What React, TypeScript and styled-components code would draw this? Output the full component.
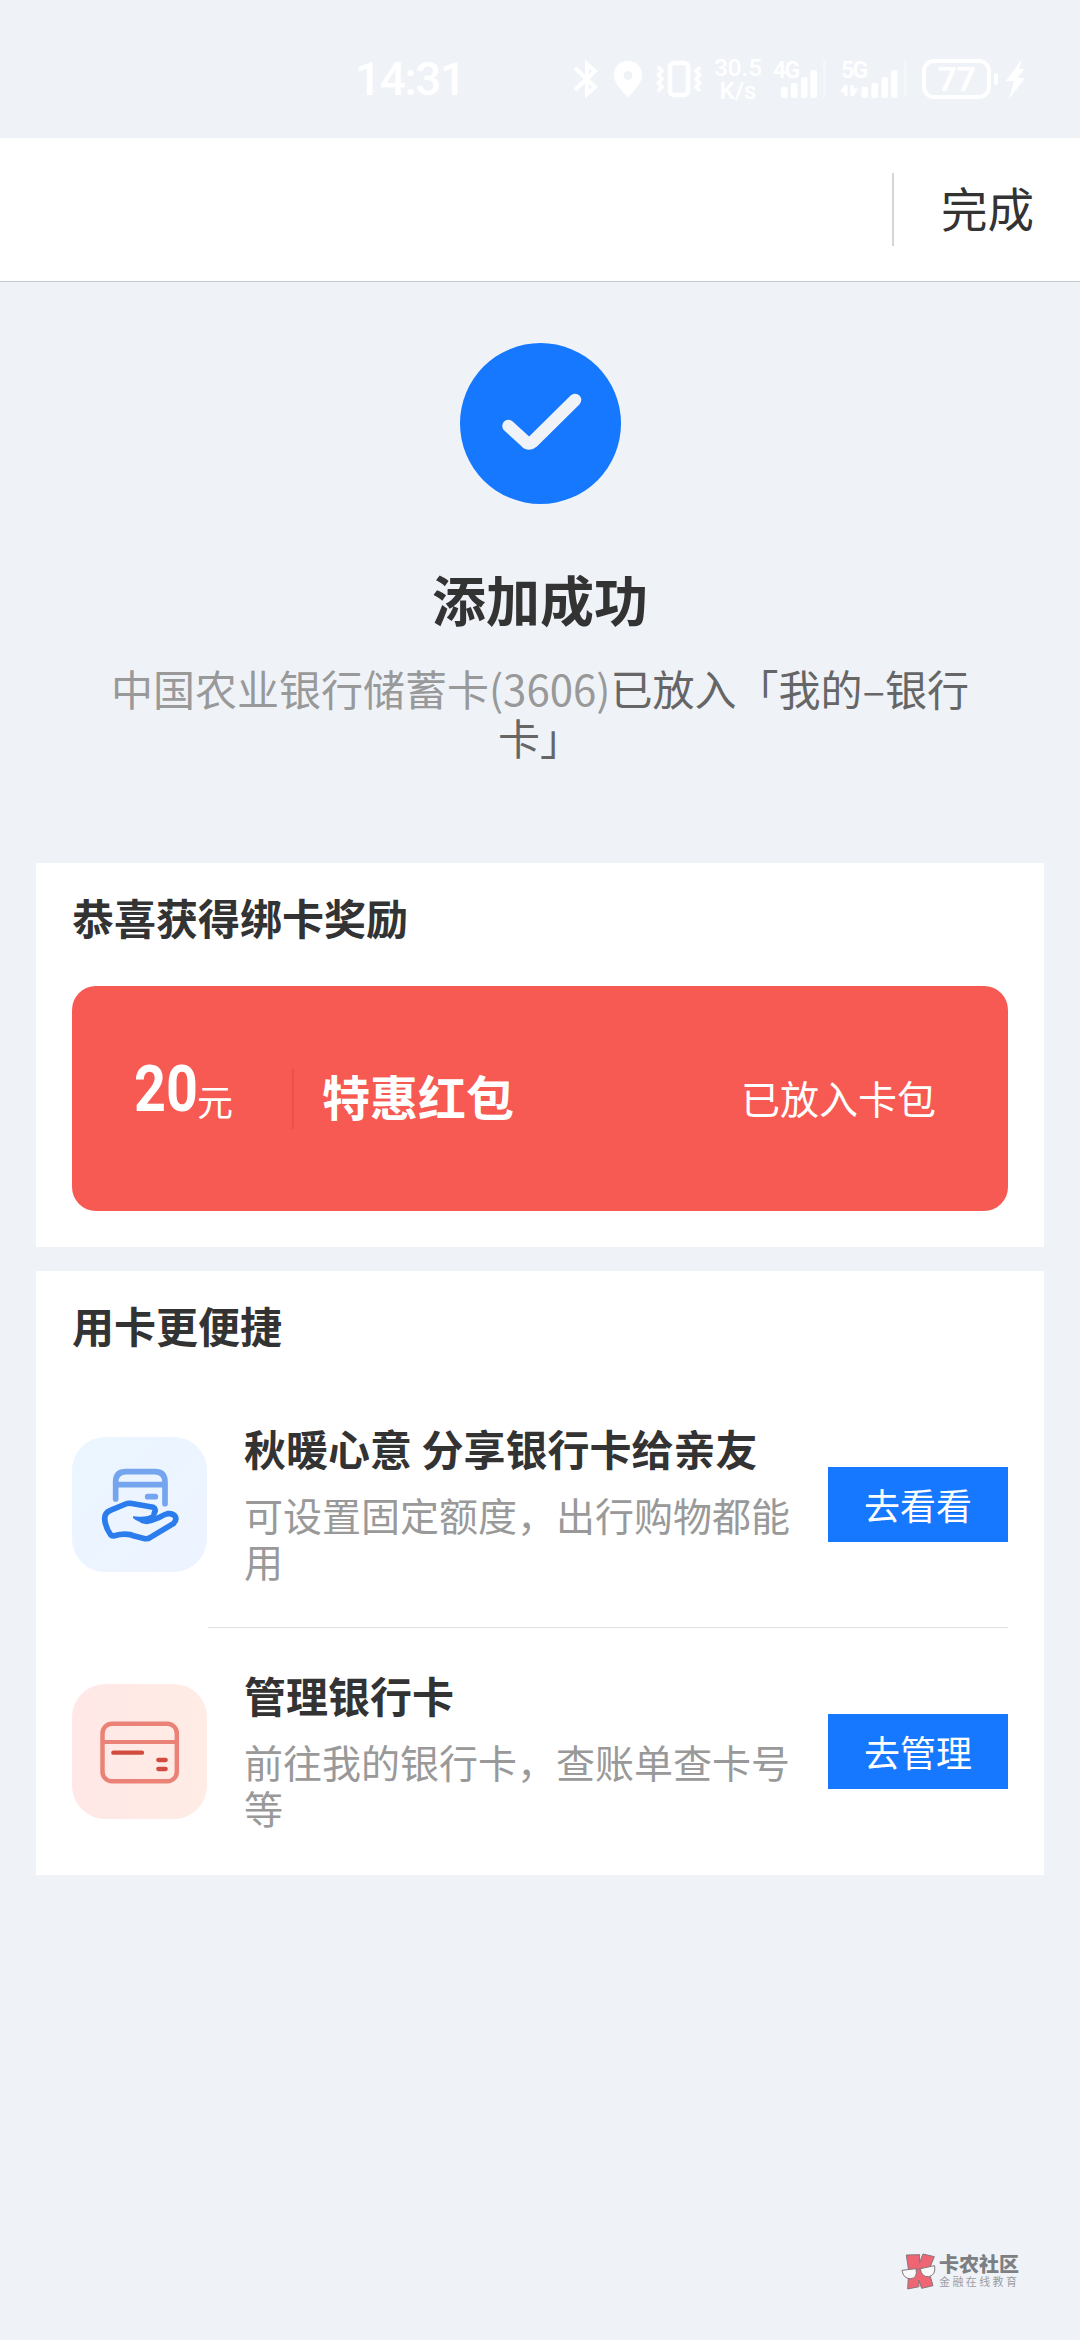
import React from 'react';
import styled, { createGlobalStyle } from 'styled-components';

const cjk = `'Noto Sans CJK SC', 'Noto Sans', sans-serif`;
const latin = `Roboto, 'Noto Sans', sans-serif`;

const GlobalStyle = createGlobalStyle`
  *, *::before, *::after { box-sizing: border-box; }
  body { margin: 0; background: #eff3f8; font-family: ${cjk}; }
  h1, h2, h3, p { margin: 0; }
`;

const Screen = styled.div`
  display: flex;
  flex-direction: column;
  width: 1080px;
  height: 2340px;
  overflow: hidden;
  background: #eff3f8;
`;

/* ---------- status bar ---------- */

const StatusBar = styled.div`
  display: flex;
  align-items: flex-start;
  flex: none;
  height: 138px;
  padding: 59px 54px 0 355px;
  color: #fff;
  font-family: ${latin};
`;

const Clock = styled.span`
  width: 110px;
  margin-right: auto;
  font-size: 46px;
  font-weight: 500;
  line-height: 40px;
  letter-spacing: -1.4px;
  white-space: nowrap;
`;

const StatusIcon = styled.svg<{ $gap?: number }>`
  display: block;
  flex: none;
  margin-right: ${(p) => p.$gap ?? 0}px;
`;

const NetSpeed = styled.span`
  width: 48px;
  margin: -2px 11px 0 0;
  font-size: 24px;
  font-weight: 500;
  line-height: 23px;
  text-align: center;
`;

const Signal = styled.span<{ $width: number; $gap: number }>`
  position: relative;
  flex: none;
  width: ${(p) => p.$width}px;
  height: 40px;
  margin-right: ${(p) => p.$gap}px;
`;

const SignalLabel = styled.span`
  position: absolute;
  left: 0;
  top: 0;
  font-size: 23px;
  font-weight: 600;
  line-height: 23px;
  letter-spacing: -1.6px;
`;

const Battery = styled.span`
  display: flex;
  align-items: center;
  justify-content: center;
  width: 69px;
  height: 40px;
  border: 4px solid #fff;
  border-radius: 12px;
  font-size: 34px;
  font-weight: 600;
  line-height: 32px;
  letter-spacing: -0.5px;
`;

const BatteryTip = styled.span`
  width: 4px;
  height: 12px;
  margin: 14px 8px 0 3px;
  border-radius: 2px;
  background: #fff;
`;

/* ---------- title bar ---------- */

const TitleBar = styled.header`
  display: flex;
  align-items: center;
  justify-content: flex-end;
  flex: none;
  height: 144px;
  border-bottom: 1px solid #c3cad1;
  background: #fff;
`;

const DoneButton = styled.button`
  display: flex;
  align-items: center;
  height: 73px;
  padding: 0 46px 5px 47px;
  border: 0;
  border-left: 2px solid #d6d6d6;
  background: none;
  color: #333;
  font: 400 46.5px/60px ${cjk};
`;

/* ---------- result ---------- */

const Result = styled.section`
  display: flex;
  flex-direction: column;
  align-items: center;
  flex: none;
  height: 581px;
  padding: 61px 100px 0;
`;

const ResultTitle = styled.h1`
  margin-top: 63px;
  color: #333;
  font-size: 54px;
  font-weight: 700;
  line-height: 64px;
`;

const ResultText = styled.p`
  margin-top: 32px;
  color: #666;
  font-size: 42px;
  line-height: 49px;
  text-align: center;
`;

const BankCard = styled.span`
  color: #999;
`;

/* ---------- cards ---------- */

const Card = styled.section`
  flex: none;
  margin: 0 36px 24px;
  padding: 29px 36px 0;
  background: #fff;
`;

const RewardCard = styled(Card)`
  height: 384px;
`;

const CardHeading = styled.h2`
  color: #333;
  font-size: 42px;
  font-weight: 700;
  line-height: 50px;
`;

const Coupon = styled.div`
  display: flex;
  align-items: center;
  height: 225px;
  margin-top: 44px;
  padding-right: 72px;
  border-radius: 24px;
  background: #f65a52;
  color: #fff;
`;

const Amount = styled.div`
  display: flex;
  align-items: baseline;
  width: 222px;
  height: 60px;
  padding-left: 62px;
  border-right: 2px solid #ec4f49;
  line-height: 52px;
`;

const AmountValue = styled.span`
  width: 63px;
  font-family: ${latin};
  font-size: 64px;
  font-weight: 700;
  line-height: 52px;
  transform: translateY(-5px) scaleX(0.87);
  transform-origin: left;
`;

const AmountUnit = styled.span`
  font-size: 36px;
`;

const CouponName = styled.h3`
  margin: -7px 0 0 28px;
  font-size: 48px;
  font-weight: 700;
  line-height: 60px;
`;

const CouponState = styled.span`
  margin: -3px 0 0 auto;
  font-size: 39px;
  line-height: 60px;
`;

const ServiceList = styled.div`
  margin-top: 31px;
`;

const ServiceRow = styled.div`
  display: grid;
  grid-template-columns: 135px 1fr 180px;
  align-items: center;
  height: 247px;
  background: linear-gradient(#e0e0e0, #e0e0e0) right bottom / 800px 1px no-repeat;

  &:last-child {
    background: none;
  }
`;

const Tile = styled.svg`
  display: block;
  width: 135px;
  height: 135px;
`;

const ServiceText = styled.div`
  padding: 0 0 3px 37px;
`;

const ServiceTitle = styled.h3`
  color: #333;
  font-size: 42px;
  font-weight: 700;
  line-height: 50px;
  white-space: nowrap;
`;

const ServiceDesc = styled.p`
  width: 549px;
  margin-top: 18px;
  color: #999;
  font-size: 39px;
  line-height: 46px;
`;

const ActionButton = styled.button`
  height: 75px;
  padding: 0 0 2px;
  border: 0;
  background: #1677ff;
  color: #fff;
  font: 400 36px/70px ${cjk};
`;

/* ---------- watermark ---------- */

const Watermark = styled.footer`
  display: flex;
  margin: auto 61px 50px auto;
`;

const WatermarkText = styled.div`
  display: flex;
  flex-direction: column;
  margin-left: 3px;
  white-space: nowrap;
`;

const WatermarkName = styled.span`
  color: #7d7f83;
  font-size: 20px;
  font-weight: 900;
  line-height: 22px;
`;

const WatermarkSlogan = styled.span`
  width: 80px;
  color: #9c9ea2;
  font-size: 11px;
  line-height: 13px;
  letter-spacing: 2.4px;
`;

const bars = [
  { x: 0, h: 11 },
  { x: 10, h: 15 },
  { x: 20, h: 21 },
  { x: 29.5, h: 28 },
];

function SignalBars({ offset, width, traffic }: { offset: number; width: number; traffic?: boolean }) {
  return (
    <StatusIcon width={width} height={40} viewBox={`0 0 ${width} 40`} fill="#fff">
      {traffic && (
        <path d="M5 26V37M5 26L1.500 32H5M11 26V37M11 37L14.500 31H11" fill="none" stroke="#fff" strokeWidth={3} />
      )}
      {bars.map((b) => (
        <rect key={b.x} x={offset + b.x} y={39 - b.h} width={6.5} height={b.h} rx={2} />
      ))}
      <rect x={width - 3} y={1} width={3} height={37} opacity={0.35} />
    </StatusIcon>
  );
}

function HandTile() {
  return (
    <Tile viewBox="126 529 405 405" fill="none" strokeLinecap="round" strokeLinejoin="round">
      <defs>
        <linearGradient id="blueTile" x1="0" y1="0" x2="1" y2="1">
          <stop offset="0" stopColor="#ebf6ff" />
          <stop offset="1" stopColor="#edf3ff" />
        </linearGradient>
      </defs>
      <rect x="126" y="529" width="405" height="405" rx="100" fill="url(#blueTile)" />
      <g stroke="#74a5ee" strokeWidth="17">
        <path d="M257 715V664Q257 633 288 633H374Q405 633 405 664V729" />
        <path d="M258 672H404" strokeLinecap="butt" />
        <path d="M353 708H376" />
      </g>
      <path
        stroke="#2b7cec"
        strokeWidth="17"
        d="M373 757Q379 744 370 740L301 728Q294 727 287 730L241 749Q224 756 224 774Q226 801 242 822Q246 827 253 825Q289 815 316 827L345 834Q354 835 361 830L430 789Q441 779 436 768Q430 757 412 759Q403 761 388 770L362 780Q350 784 338 780"
      />
      <path fill="#2b7cec" d="M309 767Q337 770 356 765Q370 760 372 747L384 750L374 770L348 788Q324 785 309 772Z" />
    </Tile>
  );
}

function CardTile() {
  return (
    <Tile viewBox="126 191 405 405" fill="none" strokeLinecap="round">
      <defs>
        <linearGradient id="redTile" x1="0" y1="0" x2="1" y2="0">
          <stop offset="0" stopColor="#ffe8e7" />
          <stop offset="1" stopColor="#ffece5" />
        </linearGradient>
      </defs>
      <rect x="126" y="191" width="405" height="405" rx="100" fill="url(#redTile)" />
      <rect x="217.500" y="310" width="223" height="173" rx="29" stroke="#ea8278" strokeWidth="13.500" />
      <path d="M218 365H440" stroke="#ea8278" strokeWidth="12" />
      <path d="M250 397H336M385 419H407M385 446H407" stroke="#d14c3f" strokeWidth="13" />
    </Tile>
  );
}

const services = [
  {
    title: '秋暖心意 分享银行卡给亲友',
    desc: '可设置固定额度，出行购物都能用',
    action: '去看看',
    icon: <HandTile />,
  },
  {
    title: '管理银行卡',
    desc: '前往我的银行卡，查账单查卡号等',
    action: '去管理',
    icon: <CardTile />,
  },
];

export default function App() {
  return (
    <Screen>
      <GlobalStyle />
      <StatusBar>
        <Clock>14:31</Clock>
        <StatusIcon $gap={14} width={26} height={40} viewBox="0 0 26 40" fill="none" stroke="#fff" strokeWidth={4}>
          <path d="M2 9L22 28L14 35V5L22 12L2 31" />
        </StatusIcon>
        <StatusIcon $gap={13} width={30} height={40} viewBox="0 0 30 40" fill="#fff">
          <path fillRule="evenodd" d="M15 2C6.500 2 1 8 1 16C1 25 10 32 15 39C20 32 29 25 29 16C29 8 23.500 2 15 2ZM15 12A4.500 4.500 0 1 1 15 21A4.500 4.500 0 1 1 15 12Z" />
        </StatusIcon>
        <StatusIcon $gap={12} width={46} height={40} viewBox="0 0 46 40" fill="none" stroke="#fff">
          <rect x="14" y="4" width="18" height="32" rx="4" strokeWidth="4.500" />
          <path strokeWidth="3.500" d="M2 8L6 12L2.500 16L6 20L2.500 24L6 28L2 32M44 8L40 12L43.500 16L40 20L43.500 24L40 28L44 32" />
        </StatusIcon>
        <NetSpeed>30.5 K/s</NetSpeed>
        <Signal $width={53} $gap={15}>
          <SignalLabel>4G</SignalLabel>
          <SignalBars offset={8} width={53} />
        </Signal>
        <Signal $width={66} $gap={15}>
          <SignalLabel>5G</SignalLabel>
          <SignalBars offset={20.5} width={66} traffic />
        </Signal>
        <Battery>77</Battery>
        <BatteryTip />
        <StatusIcon width={20} height={40} viewBox="0 0 20 40" fill="#fff">
          <path d="M16 0L0 22H8L3 40L19 19H11.500L18 10H13Z" />
        </StatusIcon>
      </StatusBar>

      <TitleBar>
        <DoneButton>完成</DoneButton>
      </TitleBar>

      <Result>
        <svg width={161} height={161} viewBox="0 0 161 161" fill="none">
          <circle cx="80.500" cy="80.500" r="80.500" fill="#1677ff" />
          <path
            d="M48.500 83L66 99Q69 102 72.500 99L115 57"
            stroke="#eff3f8"
            strokeWidth="12.500"
            strokeLinecap="round"
            strokeLinejoin="round"
          />
        </svg>
        <ResultTitle>添加成功</ResultTitle>
        <ResultText>
          <BankCard>中国农业银行储蓄卡(3606)</BankCard>已放入「我的–银行卡」
        </ResultText>
      </Result>

      <RewardCard>
        <CardHeading>恭喜获得绑卡奖励</CardHeading>
        <Coupon>
          <Amount>
            <AmountValue>20</AmountValue>
            <AmountUnit>元</AmountUnit>
          </Amount>
          <CouponName>特惠红包</CouponName>
          <CouponState>已放入卡包</CouponState>
        </Coupon>
      </RewardCard>

      <Card>
        <CardHeading>用卡更便捷</CardHeading>
        <ServiceList>
          {services.map((s) => (
            <ServiceRow key={s.title}>
              {s.icon}
              <ServiceText>
                <ServiceTitle>{s.title}</ServiceTitle>
                <ServiceDesc>{s.desc}</ServiceDesc>
              </ServiceText>
              <ActionButton>{s.action}</ActionButton>
            </ServiceRow>
          ))}
        </ServiceList>
      </Card>

      <Watermark>
        <svg width={35} height={37} viewBox="59 66 105 111" stroke="#85777c" strokeWidth={3} strokeLinejoin="round">
          <path fill="#ee6573" d="M75 72L115 71L114 96L125 69L159 77L142 119L155 164L121 172L112 147L113 167L79 174L82 120Z" />
          <path fill="#f8f9fb" d="M62 118L104 113Q110 142 87 143Q66 143 62 118ZM117 113L160 104Q164 133 142 137Q120 138 117 113Z" />
          <path fill="none" d="M104 116Q111 111 118 115" />
        </svg>
        <WatermarkText>
          <WatermarkName>卡农社区</WatermarkName>
          <WatermarkSlogan>金融在线教育</WatermarkSlogan>
        </WatermarkText>
      </Watermark>
    </Screen>
  );
}
